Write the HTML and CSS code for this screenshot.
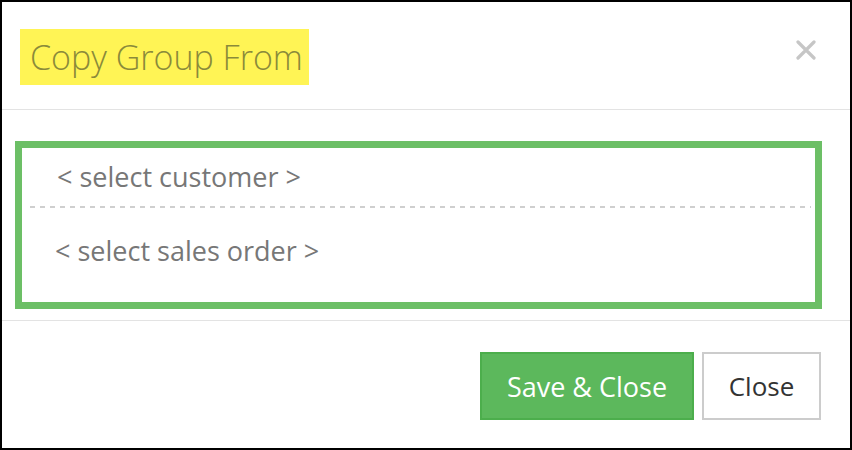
FILE: index.html
```html
<!DOCTYPE html>
<html lang="en">
<head>
  <meta charset="UTF-8">
  <meta name="viewport" content="width=device-width, initial-scale=1.0">
  <title>Copy Group From</title>
  <link rel="stylesheet" href="styles.css">
</head>
<body>
  <div class="modal">
    <div class="modal-header">
      <h1 class="modal-title"><span class="highlight">Copy Group From</span></h1>
      <button class="close-x" aria-label="Close">
        <svg width="20" height="20" viewBox="0 0 20 20">
          <path d="M2 2 L18 18 M18 2 L2 18" stroke="#c6c6c6" stroke-width="3.2" stroke-linecap="round"/>
        </svg>
      </button>
    </div>

    <div class="modal-body">
      <div class="select-box">
        <div class="select-row first">&lt; select customer &gt;</div>
        <div class="select-row second">&lt; select sales order &gt;</div>
      </div>
    </div>

    <div class="modal-footer">
      <button class="btn btn-save">Save &amp; Close</button>
      <button class="btn btn-close">Close</button>
    </div>
  </div>
</body>
</html>
```

FILE: styles.css
```css
* {
  box-sizing: border-box;
}

body {
  margin: 0;
  font-family: 'Open Sans', 'Noto Sans', sans-serif;
  background: #fff;
}

.modal {
  width: 852px;
  height: 450px;
  border: 2px solid #000;
  display: flex;
  flex-direction: column;
}

.modal-header {
  height: 108px;
  border-bottom: 1px solid #e3e3e3;
  display: flex;
  align-items: flex-start;
  justify-content: space-between;
  padding: 27px 34px 0 18px;
}

.modal-title {
  margin: 0;
  font-size: 34px;
  font-weight: 300;
  line-height: 56px;
}

.highlight {
  display: inline-block;
  background: #fff455;
  color: #8a8a3a;
  padding: 0 6px 0 10px;
  height: 56px;
}

.close-x {
  border: none;
  background: none;
  padding: 0;
  margin-top: 11px;
  cursor: pointer;
}

.modal-body {
  height: 211px;
  border-bottom: 1px solid #e3e3e3;
  padding: 31px 28px 0 13px;
}

.select-box {
  border: 7px solid #6cbf66;
  height: 168px;
}

.select-row {
  font-size: 27px;
  color: #777;
  line-height: 33px;
}

.select-row.first {
  padding: 12px 0 15px 27px;
  margin: 0 4px 0 8px;
  background-image: repeating-linear-gradient(to right, #cfcfcf 0 5px, transparent 5px 10px);
  background-size: 100% 2px;
  background-position: bottom;
  background-repeat: no-repeat;
}

.select-row.second {
  padding: 26px 0 0 33px;
}

.modal-footer {
  flex: 1;
  display: flex;
  justify-content: flex-end;
  align-items: flex-start;
  gap: 8px;
  padding: 31px 29px 0 0;
}

.btn {
  height: 68px;
  font-family: inherit;
  font-size: 26px;
  border-radius: 0;
  cursor: pointer;
}

.btn-save {
  width: 214px;
  font-size: 27px;
  background: #5cb85c;
  border: 2px solid #4cae4c;
  color: #fff;
}

.btn-close {
  width: 119px;
  background: #fff;
  border: 2px solid #ccc;
  color: #333;
}
```
